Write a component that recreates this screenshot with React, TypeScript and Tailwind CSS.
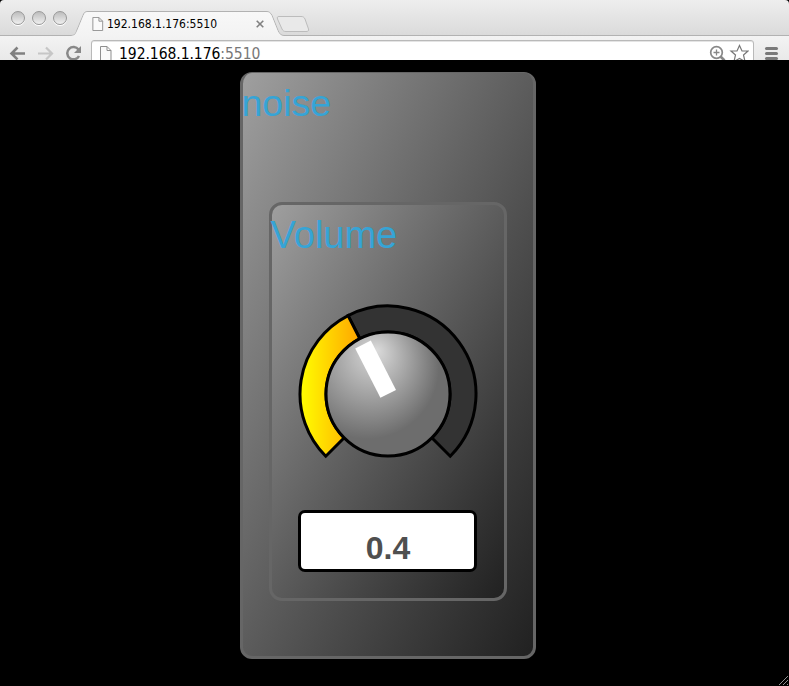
function PageIcon({ className }: { className: string }) {
  return (
    <svg viewBox="0 0 12 15" className={className} fill="#fafafa" stroke="#8f8f8f" strokeWidth="1">
      <path d="M.5 .5H7L11 4.5V14.5H.5Z M7 .5V4.5H11" />
    </svg>
  );
}

function Light() {
  return (
    <div className="h-[14px] w-[14px] rounded-full border border-[#989898] bg-linear-to-b from-[#bdbdbd] to-[#f0f0f0] shadow-[0_1px_0_#fff]" />
  );
}

function TabStrip() {
  return (
    <div className="relative flex h-9 bg-linear-to-b from-[#eeeeee] to-[#dadada]">
      <svg className="absolute inset-0" width="789" height="36" viewBox="0 0 789 36">
        <defs>
          <linearGradient id="tab" x1="0" y1="0" x2="0" y2="1">
            <stop offset="0" stopColor="#f8f8f8" />
            <stop offset="1" stopColor="#f3f3f3" />
          </linearGradient>
        </defs>
        <path
          d="M0 35.5H71C75 35.5 76 33 77 30L83 15.5C84 12.500 85 11.500 88 11.500H266C269 11.500 270.500 12.500 272 15.500L278 30.500C279.500 34 281 35.500 284 35.500H789"
          fill="none"
          stroke="#b2b2b2"
        />
        <path d="M71 36C75 36 76 33 77.500 30L83.500 15.500C84.500 13 86 12 88 12H266C269 12 270 13 271.500 15.500L277.500 30.500C279 34 281 36 284 36Z" fill="url(#tab)" />
        <path
          d="M279 16.500H301C303 16.500 304 17 305 19L308.500 29C309 31 308 31.500 306 31.500H286C284 31.500 283 31 282 29L277.500 19C277 17 277.500 16.500 279 16.500Z"
          fill="#e9e9e9"
          stroke="#bcbcbc"
        />
      </svg>
      <div className="relative flex w-full items-start">
        <div className="ml-[11px] mt-[11px] flex gap-[7px]">
          <Light />
          <Light />
          <Light />
        </div>
        <PageIcon className="ml-[25px] mt-[17px] h-[14px] w-3" />
        <span className="ml-[3px] mt-[16px] w-[149px] whitespace-nowrap font-['DejaVu_Sans_Condensed','DejaVu_Sans',sans-serif] text-[12px] leading-4 text-black">
          192.168.1.176:5510
        </span>
        <svg className="mt-[20px] h-2 w-2" viewBox="0 0 8 8" stroke="#808080" strokeWidth="1.6">
          <path d="M.7 .7L7.300 7.300M7.300 .7L.7 7.300" />
        </svg>
      </div>
    </div>
  );
}

function Toolbar() {
  return (
    <div className="flex h-6 items-start overflow-hidden bg-linear-to-b from-[#f3f3f3] to-[#e9e9e9]">
      <svg className="ml-[9px] h-6 w-[76px] shrink-0" viewBox="9 36 76 24" fill="none">
        <path d="M25 53.500H12M17.500 47.500L11.500 53.500L17.500 59.500" stroke="#808080" strokeWidth="2.600" />
        <path d="M38 53.500H51M46 47.500L52 53.500L46 59.500" stroke="#c6c6c6" strokeWidth="2.200" />
        <path d="M78.500 49.500A6.200 6.200 0 1 0 79 56" stroke="#888" strokeWidth="2.500" />
        <path d="M81 46V53H74Z" fill="#888" />
      </svg>
      <div className="ml-[6px] mt-1 flex h-[30px] w-[663px] shrink-0 items-start rounded-[3px] border border-[#b9b9b9] bg-white shadow-[inset_0_1px_0_#e4e4e4]">
        <PageIcon className="ml-[8px] mt-[5px] h-[15px] w-3" />
        <span className="ml-[7px] mt-[3px] whitespace-nowrap font-['DejaVu_Sans_Condensed','DejaVu_Sans',sans-serif] text-[15.500px] leading-5 tracking-[-0.05px] text-black">
          192.168.1.176<span className="text-[#777]">:5510</span>
        </span>
        <svg className="ml-auto mr-[4px] h-[19px] w-[40px]" viewBox="709 41 40 19" fill="none">
          <circle cx="716.500" cy="52.500" r="5.800" stroke="#888" strokeWidth="1.700" />
          <path d="M716.500 49.500V55.500M713.500 52.500H719.500" stroke="#888" strokeWidth="1.300" />
          <path d="M720.500 56.500L724.500 60.500" stroke="#888" strokeWidth="2.600" />
          <path d="M739.500 45.500L742 51H748L743.500 55L745 61.500L739.500 58.500L734 61.500L735.500 55L731 51H737Z" stroke="#777" strokeWidth="1.200" />
        </svg>
      </div>
      <div className="ml-[11px] mt-[11px] flex flex-col gap-[2px]">
        <div className="h-[3px] w-[13px] rounded-full bg-[#7a7a7a]" />
        <div className="h-[3px] w-[13px] rounded-full bg-[#7a7a7a]" />
        <div className="h-[3px] w-[13px] rounded-full bg-[#7a7a7a]" />
      </div>
    </div>
  );
}

const CX = 90;
const CY = 90;
const OUTER = 88;
const INNER = 62;

function point(radius: number, degrees: number) {
  const a = (degrees * Math.PI) / 180;
  return `${CX + radius * Math.sin(a)} ${CY - radius * Math.cos(a)}`;
}

function band(from: number, to: number) {
  const large = to - from > 180 ? 1 : 0;
  return `M${point(OUTER, from)}A${OUTER} ${OUTER} 0 ${large} 1 ${point(OUTER, to)}L${point(INNER, to)}A${INNER} ${INNER} 0 ${large} 0 ${point(INNER, from)}Z`;
}

function Knob({ value }: { value: number }) {
  const angle = -135 + value * 270;
  return (
    <svg width="180" height="160" viewBox="0 0 180 160" className="shrink-0">
      <defs>
        <linearGradient id="level" x1="0" x2="1" y1="0" y2="0">
          <stop offset="0" stopColor="#ffff00" />
          <stop offset="1" stopColor="#ffa500" />
        </linearGradient>
        <radialGradient id="dome" gradientUnits="userSpaceOnUse" cx="69" cy="63" r="72" fx="79" fy="46">
          <stop offset="0" stopColor="#dadada" />
          <stop offset="1" stopColor="#6d6d6d" />
        </radialGradient>
      </defs>
      <path d={band(angle, 135)} fill="#333" stroke="#000" strokeWidth="3" />
      <path d={band(-135, angle)} fill="url(#level)" stroke="#000" strokeWidth="3" />
      <circle cx={CX} cy={CY} r={INNER} fill="url(#dome)" stroke="#000" strokeWidth="3" />
      <rect x="81.500" y="34.500" width="17.500" height="55.500" fill="#fff" transform={`rotate(${angle} ${CX} ${CY})`} />
    </svg>
  );
}

export default function App() {
  return (
    <div className="flex h-[686px] w-[789px] flex-col overflow-hidden bg-black font-['Liberation_Sans',Arial,sans-serif]">
      <header className="h-[60px] shrink-0 overflow-hidden rounded-t-[4px]">
        <TabStrip />
        <Toolbar />
      </header>
      <main className="relative flex-1 pl-[239.500px] pt-3">
        <section className="h-[587px] w-[296.500px] rounded-[12px] border-[3px] border-t-[1.500px] border-[#666] bg-linear-to-br from-[#a0a0a0] to-[#202020] bg-origin-border">
          <h1 className="mt-[8px] ml-[-1px] h-[44px] text-[37.500px] leading-[44px] text-[#36a4d6]">noise</h1>
          <div className="ml-[26px] mt-[77px] flex h-[399px] w-[238px] flex-col items-center rounded-[13px] border-[3px] border-[#666] bg-linear-to-br from-[#a0a0a0] to-[#202020] bg-origin-border">
            <h2 className="ml-[-2px] mt-[8px] h-[44px] w-full text-[38px] leading-[44px] text-[#36a4d6]">Volume</h2>
            <div className="mt-[47px] flex">
              <Knob value={0.4} />
            </div>
            <output className="mt-[46px] flex h-[62px] w-[179px] items-center justify-center rounded-[7px] border-[3px] border-black bg-white pt-[14px] pl-px text-[32px] leading-9 font-bold text-[#4f4f4f]">
              0.4
            </output>
          </div>
        </section>
        <svg className="absolute right-0 bottom-0" width="12" height="12" viewBox="0 0 12 12" stroke="#929292" strokeWidth="1">
          <path d="M2 11L11 2M6 11L11 6M10 11L11 10" />
        </svg>
      </main>
    </div>
  );
}
